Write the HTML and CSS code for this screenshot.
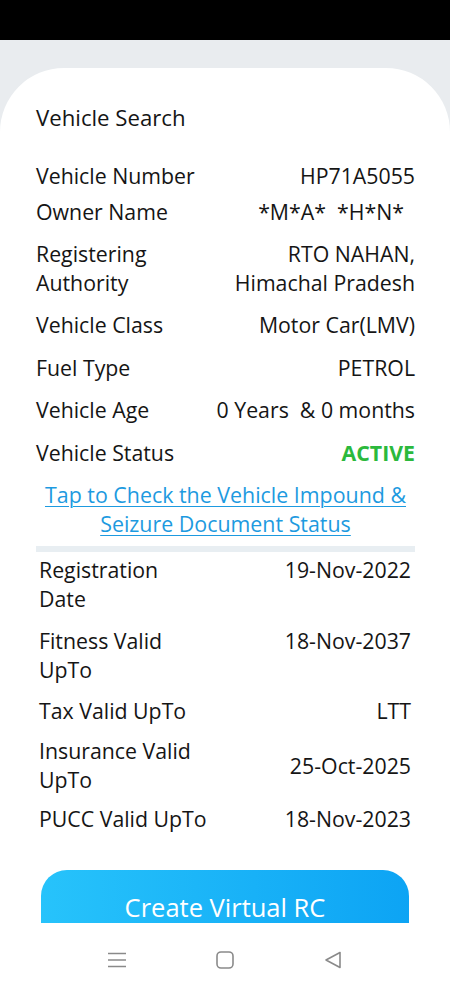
FILE: index.html
```html
<html>
<head>
	<link rel="stylesheet" href="styles.css">
	<title>Vehicle Search</title>
</head>
<body>
	<div class="statusbar"></div>
	<div class="main">
		<div class="card">
			<div class="title">Vehicle Search</div>

			<div class="details">
				<div class="row first">
					<span class="label">Vehicle Number</span>
					<span class="value">HP71A5055</span>
				</div>
				<div class="row close">
					<span class="label">Owner Name</span>
					<span class="value pre">*M*A*  *H*N*  </span>
				</div>
				<div class="row">
					<span class="label">Registering<br>Authority</span>
					<span class="value">RTO NAHAN,<br>Himachal Pradesh</span>
				</div>
				<div class="row">
					<span class="label">Vehicle Class</span>
					<span class="value">Motor Car(LMV)</span>
				</div>
				<div class="row wide">
					<span class="label">Fuel Type</span>
					<span class="value">PETROL</span>
				</div>
				<div class="row">
					<span class="label">Vehicle Age</span>
					<span class="value pre">0 Years  &amp; 0 months</span>
				</div>
				<div class="row wide">
					<span class="label">Vehicle Status</span>
					<span class="value active">ACTIVE</span>
				</div>
			</div>

			<a class="link" href="#">Tap to Check the Vehicle Impound &amp;<br>Seizure Document Status</a>

			<div class="separator"></div>

			<div class="validity">
				<div class="row first">
					<span class="label">Registration<br>Date</span>
					<span class="value">19-Nov-2022</span>
				</div>
				<div class="row">
					<span class="label">Fitness Valid<br>UpTo</span>
					<span class="value">18-Nov-2037</span>
				</div>
				<div class="row tight">
					<span class="label">Tax Valid UpTo</span>
					<span class="value">LTT</span>
				</div>
				<div class="row middle">
					<span class="label">Insurance Valid<br>UpTo</span>
					<span class="value">25-Oct-2025</span>
				</div>
				<div class="row last">
					<span class="label">PUCC Valid UpTo</span>
					<span class="value">18-Nov-2023</span>
				</div>
			</div>

			<div class="btn-rc">Create Virtual RC</div>
		</div>
	</div>
	<div class="navbar">
		<svg class="nav-icon" width="22" height="22" viewBox="0 0 22 22">
			<path d="M2 4.5h18M2 11h18M2 17.5h18" stroke="#8a8a8a" stroke-width="1.6" fill="none"/>
		</svg>
		<svg class="nav-icon" width="22" height="22" viewBox="0 0 22 22">
			<rect x="3" y="3" width="16" height="16" rx="4" stroke="#8a8a8a" stroke-width="1.6" fill="none"/>
		</svg>
		<svg class="nav-icon" width="22" height="22" viewBox="0 0 22 22">
			<path d="M18 3.5v15L4 11z" stroke="#8a8a8a" stroke-width="1.6" stroke-linejoin="round" fill="none"/>
		</svg>
	</div>
</body>
</html>
```

FILE: styles.css
```css
body {
	margin: 0;
	width: 450px;
	height: 1000px;
	display: flex;
	flex-direction: column;
	background-color: #e9ecef;
	font-family: 'Open Sans', 'Noto Sans', sans-serif;
	color: #151515;
	overflow: hidden;
}

.statusbar {
	height: 40px;
	background-color: #000;
	flex: none;
}

.main {
	flex: 1;
	overflow: hidden;
	padding-top: 28px;
}

.card {
	background-color: #fff;
	border-radius: 64px 64px 0 0;
	padding: 36px 35px 40px 36px;
	min-height: 100%;
}

.title {
	font-size: 22.2px;
	line-height: 28px;
	margin-bottom: 29px;
}

.row {
	display: flex;
	justify-content: space-between;
	align-items: flex-start;
	font-size: 21.3px;
	line-height: 29px;
	margin-top: 13px;
}

.row.first {
	margin-top: 0;
}

.row.close {
	margin-top: 7px;
}

.row.wide {
	margin-top: 14px;
}

.row.tight {
	margin-top: 12px;
}

.row.middle {
	align-items: center;
	margin-top: 11px;
}

.row.last {
	margin-top: 10px;
}

.value {
	text-align: right;
}

.pre {
	white-space: pre;
}

.active {
	color: #2bb93c;
	font-weight: bold;
}

.link {
	display: block;
	margin-top: 13px;
	text-align: center;
	font-size: 21.4px;
	line-height: 29px;
	color: #1d9ae0;
	text-decoration: underline;
	text-decoration-thickness: 1px;
	text-underline-offset: 3px;
}

.separator {
	height: 6px;
	background-color: #e8eef2;
	margin-top: 8px;
}

.validity {
	padding: 3px 4px 0 3px;
}

.btn-rc {
	margin: 37px 6px 0 5px;
	height: 53px;
	box-sizing: border-box;
	padding-top: 20px;
	border-radius: 26px 26px 0 0;
	background: linear-gradient(to right, #27c3fb, #0da4f4);
	color: #fff;
	font-size: 25.5px;
	line-height: 34px;
	text-align: center;
}

.navbar {
	flex: none;
	height: 77px;
	background-color: #fff;
	display: flex;
	justify-content: center;
	align-items: center;
	gap: 86px;
	padding-bottom: 4px;
	box-sizing: border-box;
}

.nav-icon {
	display: block;
}
```
